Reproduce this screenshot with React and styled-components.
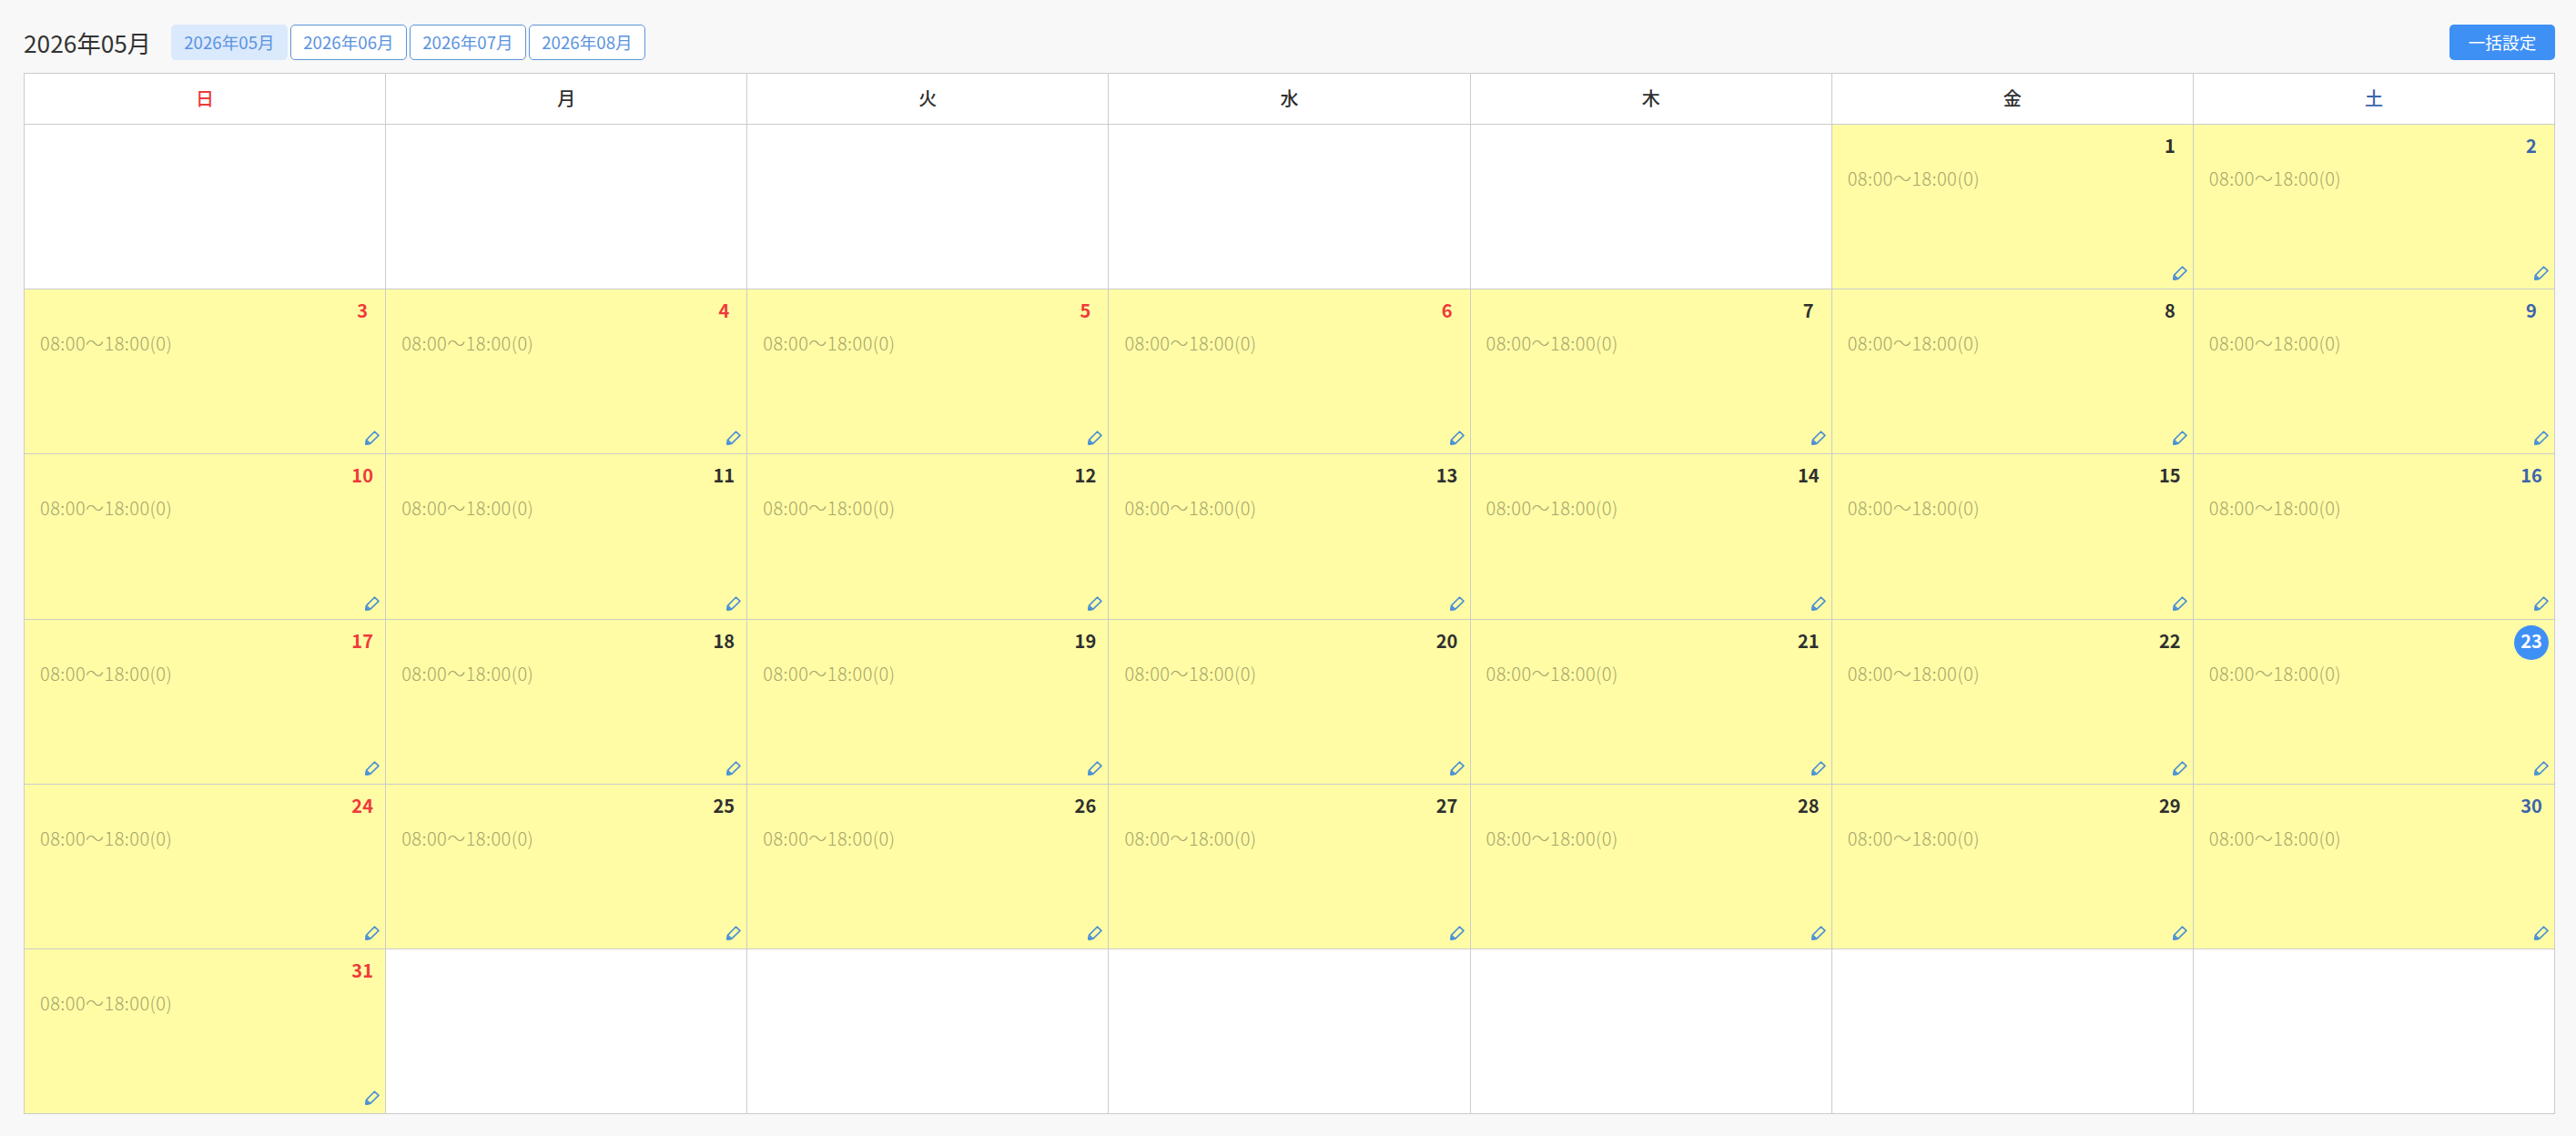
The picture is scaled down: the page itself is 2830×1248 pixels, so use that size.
import React from 'react'
import styled, { createGlobalStyle } from 'styled-components'

const GlobalStyle = createGlobalStyle`
  html, body {
    margin: 0;
    padding: 0;
    background: #f8f8f8;
    font-family: "Noto Sans CJK JP", "Noto Sans", sans-serif;
    color: #333;
  }
`

const Page = styled.div`
  box-sizing: border-box;
  width: 2830px;
  height: 1248px;
  padding: 27px 23px 24px 26px;
`

const Toolbar = styled.div`
  display: flex;
  align-items: center;
  height: 39px;
  margin-bottom: 14px;
`

const Title = styled.h1`
  margin: 0 24px 0 0;
  font-size: 26.3px;
  font-weight: 400;
  color: #333;
  line-height: 39px;
  width: 138px;
  white-space: nowrap;
`

const MonthTabs = styled.div`
  display: flex;
  gap: 3px;
  flex: 1;
`

const MonthTab = styled.button`
  box-sizing: border-box;
  width: 128px;
  height: 39px;
  padding: 0 0 2px;
  font: inherit;
  font-size: 18.67px;
  color: #5b94e0;
  background: ${p => (p.$active ? '#dbe9fc' : '#fff')};
  border: 1px solid ${p => (p.$active ? '#dbe9fc' : '#5b94d6')};
  border-radius: 5px;
`

const BulkButton = styled.button`
  box-sizing: border-box;
  width: 116px;
  height: 39px;
  padding: 0 0 2px;
  font: inherit;
  font-size: 18.67px;
  color: #fff;
  background: #3e90f5;
  border: 0;
  border-radius: 5px;
`

const Calendar = styled.div`
  display: grid;
  grid-template-columns: repeat(7, 1fr);
  grid-template-rows: 56px repeat(6, 1fr);
  height: 1144px;
  box-sizing: border-box;
  border-top: 1px solid #ccc;
  border-left: 1px solid #ccc;
  background: #fff;
`

const dayColor = p => (p.$day === 0 || p.$holiday ? '#ee3a3a' : p.$day === 6 ? '#3c64ad' : '#2f2f2f')

const HeaderCell = styled.div`
  display: flex;
  align-items: center;
  justify-content: center;
  padding-bottom: 3px;
  border-right: 1px solid #ccc;
  border-bottom: 1px solid #ccc;
  font-size: 20px;
  font-weight: 500;
  color: ${dayColor};
`

const DayCell = styled.div`
  display: flex;
  flex-direction: column;
  min-width: 0;
  padding: 6px 6px 9px 17px;
  border-right: 1px solid #ccc;
  border-bottom: 1px solid #ccc;
  background: ${p => (p.$open ? '#fffca5' : '#fff')};
`

const DayNumber = styled.div`
  box-sizing: border-box;
  display: flex;
  align-items: center;
  justify-content: center;
  align-self: flex-end;
  width: 38px;
  height: 38px;
  padding-bottom: 5px;
  border-radius: 50%;
  font-size: 20px;
  font-weight: 700;
  color: ${p => (p.$today ? '#fff' : dayColor(p))};
  background: ${p => (p.$today ? '#3e90f5' : 'transparent')};
`

const TimeText = styled.div`
  font-size: 20px;
  line-height: 30px;
  font-weight: 300;
  letter-spacing: 0.45px;
  color: #a8a56c;
  white-space: nowrap;
`

const EditIcon = styled.svg`
  display: block;
  align-self: flex-end;
  margin-top: auto;
  width: 16px;
  height: 16px;
  fill: none;
  stroke: #4a8fd6;
  stroke-width: 1.6;
  stroke-linejoin: round;
`

const WEEK = ['日', '月', '火', '水', '木', '金', '土']
const MONTHS = ['2026年05月', '2026年06月', '2026年07月', '2026年08月']
const FIRST_OFFSET = 5
const DAYS_IN_MONTH = 31
const TODAY = 23
const HOLIDAYS = [3, 4, 5, 6]

const cells = Array.from({ length: 42 }, (_, i) => {
  const date = i - FIRST_OFFSET + 1
  return { key: i, day: i % 7, date: date >= 1 && date <= DAYS_IN_MONTH ? date : null }
})

const Pencil = () => (
  <EditIcon viewBox="0 0 16 16">
    <path d="M1 15 L1.4 10.4 L10.4 1.2 L15 5.4 L5.7 14.4 Z" />
    <path d="M1.4 10.4 L5.7 14.4" />
    <path d="M1 15 L3.8 14.7 L1.3 12.4 Z" fill="#4a8fd6" />
  </EditIcon>
)

export default function App() {
  return (
    <Page>
      <GlobalStyle />
      <Toolbar>
        <Title>2026年05月</Title>
        <MonthTabs>
          {MONTHS.map((m, i) => (
            <MonthTab key={m} $active={i === 0}>{m}</MonthTab>
          ))}
        </MonthTabs>
        <BulkButton>一括設定</BulkButton>
      </Toolbar>
      <Calendar>
        {WEEK.map((w, i) => (
          <HeaderCell key={w} $day={i}>{w}</HeaderCell>
        ))}
        {cells.map(c => (
          <DayCell key={c.key} $open={!!c.date}>
            {c.date && (
              <>
                <DayNumber
                  $day={c.day}
                  $holiday={HOLIDAYS.includes(c.date)}
                  $today={c.date === TODAY}
                >
                  {c.date}
                </DayNumber>
                <TimeText>08:00〜18:00(0)</TimeText>
                <Pencil />
              </>
            )}
          </DayCell>
        ))}
      </Calendar>
    </Page>
  )
}
